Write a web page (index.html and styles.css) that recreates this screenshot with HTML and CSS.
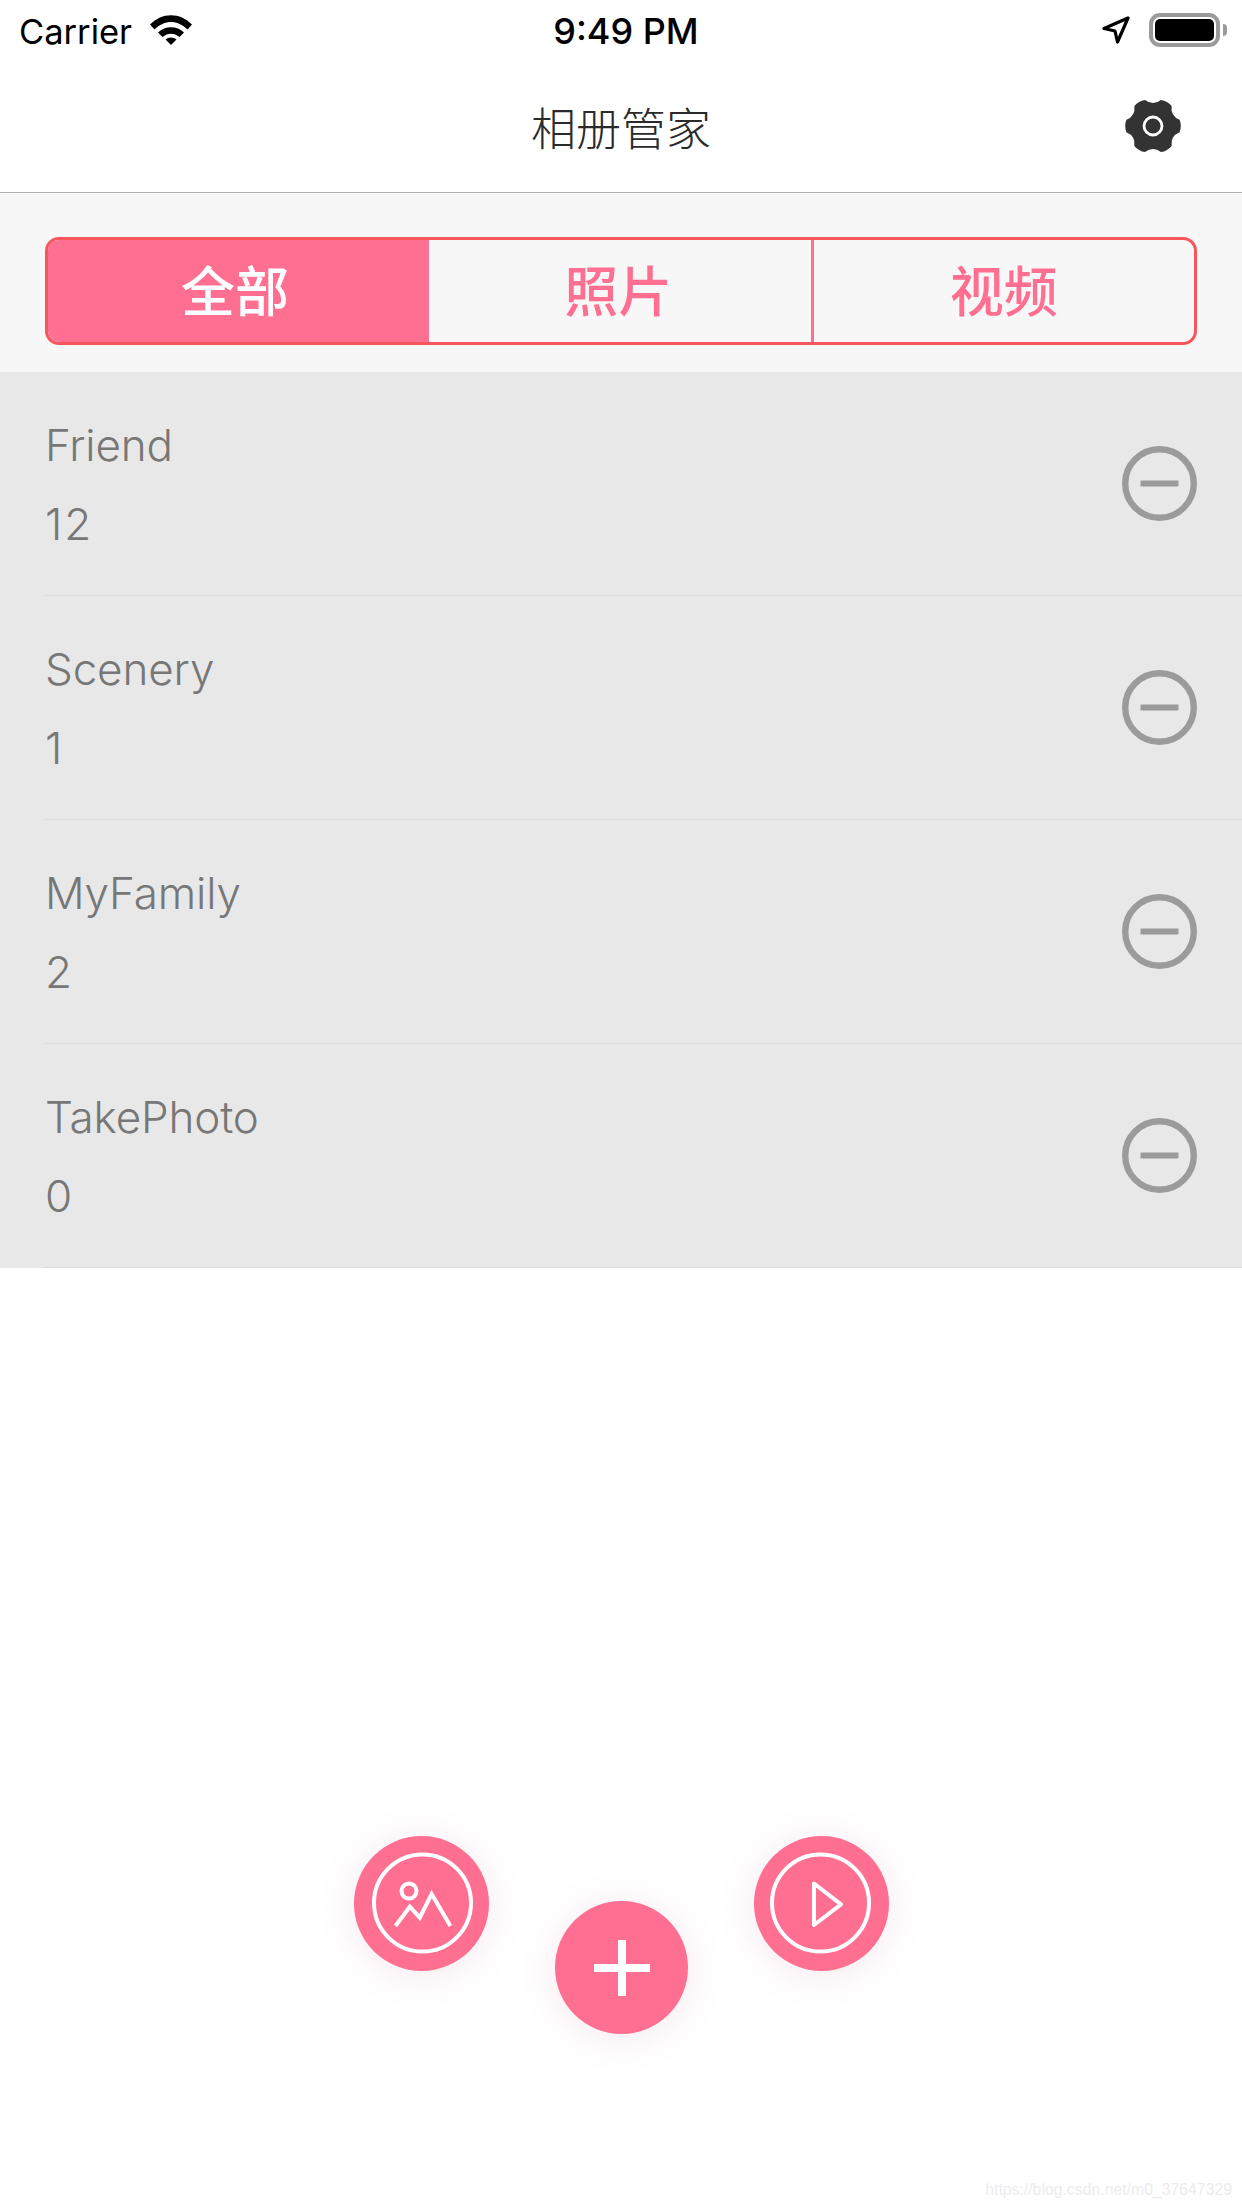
FILE: index.html
```html
<!DOCTYPE html>
<html lang="zh">
<head>
<meta charset="utf-8">
<title>相册管家</title>
<link rel="stylesheet" href="styles.css">
</head>
<body>
<div class="screen">
  <header class="status">
    <div class="status-left">
      <span class="carrier">Carrier</span>
      <svg class="wifi" viewBox="0 0 42 30" width="42" height="30"><path d="M0 9.5C12-3 30-3 42 9.500L37.500 14.500C27.500 4.500 14.500 4.500 4.500 14.500Z"/><path d="M8 17.500C15 10.500 27 10.500 34 17.500L29.500 22C24.500 17.500 17.500 17.500 12.500 22Z"/><path d="M15.500 24.500C18.500 21.700 23.500 21.700 26.500 24.500L21 30Z"/></svg>
    </div>
    <span class="time">9:49 PM</span>
    <div class="status-right">
      <svg class="arrow" viewBox="0 0 28 28" width="28" height="28"><path d="M26 2L2 12.500L13 15L15.500 26Z" fill="none" stroke="#000" stroke-width="3.200" stroke-linejoin="round"/></svg>
      <div class="battery"><div class="battery-fill"></div></div>
      <div class="battery-nub"></div>
    </div>
  </header>
  <nav class="navbar">
    <span></span>
    <h1 class="title">相册管家</h1>
    <svg class="gear" viewBox="0 0 58 54" width="58" height="54">
      <path fill="#333" d="M55.600 20.860Q58 27 55.600 33.140Q46.320 37 47.620 46.970Q43.500 52.110 36.980 53.110Q29 47 21.020 53.110Q14.500 52.110 10.380 46.970Q11.680 37 2.400 33.140Q0 27 2.400 20.860Q11.680 17 10.380 7.030Q14.500 1.890 21.020 0.890Q29 7 36.980 0.890Q43.500 1.890 47.620 7.030Q46.320 17 55.600 20.860Z"/>
      <circle cx="29" cy="27" r="9" fill="none" stroke="#fff" stroke-width="2.800"/>
    </svg>
  </nav>
  <section class="segment-bar">
    <div class="segment">
      <div class="seg seg-active">全部</div>
      <div class="seg seg-mid">照片</div>
      <div class="seg seg-last">视频</div>
    </div>
  </section>
  <ul class="list">
    <li class="row"><div class="row-inner"><div class="row-text"><div class="row-name">Friend</div><div class="row-count">12</div></div><svg class="minus" viewBox="0 0 75 75" width="75" height="75"><circle cx="37.500" cy="37.500" r="34.300" fill="none" stroke="#9b9b9b" stroke-width="6.400"/><rect x="18.500" y="34.500" width="38" height="6" fill="#9b9b9b"/></svg></div></li>
    <li class="row"><div class="row-inner"><div class="row-text"><div class="row-name">Scenery</div><div class="row-count">1</div></div><svg class="minus" viewBox="0 0 75 75" width="75" height="75"><circle cx="37.500" cy="37.500" r="34.300" fill="none" stroke="#9b9b9b" stroke-width="6.400"/><rect x="18.500" y="34.500" width="38" height="6" fill="#9b9b9b"/></svg></div></li>
    <li class="row"><div class="row-inner"><div class="row-text"><div class="row-name">MyFamily</div><div class="row-count">2</div></div><svg class="minus" viewBox="0 0 75 75" width="75" height="75"><circle cx="37.500" cy="37.500" r="34.300" fill="none" stroke="#9b9b9b" stroke-width="6.400"/><rect x="18.500" y="34.500" width="38" height="6" fill="#9b9b9b"/></svg></div></li>
    <li class="row"><div class="row-inner"><div class="row-text"><div class="row-name">TakePhoto</div><div class="row-count">0</div></div><svg class="minus" viewBox="0 0 75 75" width="75" height="75"><circle cx="37.500" cy="37.500" r="34.300" fill="none" stroke="#9b9b9b" stroke-width="6.400"/><rect x="18.500" y="34.500" width="38" height="6" fill="#9b9b9b"/></svg></div></li>
  </ul>
  <button class="fab fab-photo">
    <svg viewBox="0 0 135 135" width="135" height="135" fill="none" stroke="#fff" stroke-width="4"><circle cx="68.500" cy="67" r="48.500"/><circle cx="55" cy="55" r="7.500"/><path d="M41.500 90L55.800 70.700L65.800 81.700L77.600 58L96.400 90"/></svg>
  </button>
  <button class="fab fab-video">
    <svg viewBox="0 0 135 135" width="135" height="135" fill="none" stroke="#fff" stroke-width="4" stroke-linejoin="round"><circle cx="66.500" cy="67" r="48.500"/><path d="M60 47.500L87 68.300L60 89Z"/></svg>
  </button>
  <button class="fab fab-add">
    <svg viewBox="0 0 56 56" width="56" height="56"><rect x="24" y="0" width="8" height="56" fill="#fff"/><rect x="0" y="24" width="56" height="8" fill="#fff"/></svg>
  </button>
  <div class="watermark">https://blog.csdn.net/m0_37647329</div>
</div>
</body>
</html>
```

FILE: styles.css
```css
* { box-sizing: border-box; }
html, body { margin: 0; padding: 0; background: #fff; }
.screen {
  position: relative;
  width: 1242px;
  height: 2208px;
  overflow: hidden;
  background: #fff;
  font-family: Inter, "Noto Sans CJK SC", sans-serif;
}
.status {
  height: 60px;
  display: grid;
  grid-template-columns: 1fr auto 1fr;
  align-items: center;
  padding: 2px 15px 0 19px;
  color: #000;
}
.status-left { display: flex; align-items: center; gap: 18px; }
.carrier { font-size: 34.5px; font-weight: 400; }
.wifi { fill: #000; margin-top: -2px; }
.time { font-size: 36px; font-weight: 500; padding-left: 6px; }
.status-right { display: flex; align-items: center; justify-content: flex-end; margin-top: -2px; }
.arrow { margin-right: 19px; }
.battery {
  width: 71px;
  height: 34px;
  border: 4px solid #9a9a9a;
  border-radius: 11px;
  padding: 2px;
}
.battery-fill { width: 100%; height: 100%; background: #000; border-radius: 5px; }
.battery-nub {
  width: 4px;
  height: 12px;
  margin-left: 3px;
  background: #9a9a9a;
  border-radius: 0 6px 6px 0;
}
.navbar {
  height: 133px;
  display: grid;
  grid-template-columns: 1fr auto 1fr;
  align-items: center;
  padding: 0 60px;
  border-bottom: 1px solid #b2b2b2;
}
.title {
  margin: 0;
  font-family: "Noto Sans CJK SC", sans-serif;
  font-size: 45px;
  font-weight: 300;
  color: #2a2a2a;
}
.gear { justify-self: end; }
.segment-bar {
  height: 179px;
  background: #f7f7f7;
  padding: 44px 45px 0 45px;
}
.segment {
  display: grid;
  grid-template-columns: 381px 384.5px 1fr;
  height: 108px;
  border: 3px solid #f8565f;
  border-radius: 14px;
  overflow: hidden;
  font-family: "Noto Sans CJK SC", sans-serif;
  font-size: 54px;
  font-weight: 500;
  color: #ff6f91;
}
.seg {
  display: flex;
  align-items: center;
  justify-content: center;
  padding-bottom: 5px;
  border-right: 3px solid #ff6f91;
}
.seg-active { background: #ff6f91; color: #fff; padding-right: 4px; }
.seg-mid { padding-right: 3px; }
.seg-last { border-right: 0; }
.list { margin: 0; padding: 0; list-style: none; background: #e8e8e8; }
.row { height: 224px; padding-left: 45px; }
.row-inner {
  height: 100%;
  display: flex;
  align-items: center;
  justify-content: space-between;
  padding-right: 45px;
  border-bottom: 1px solid #dcdcdc;
}
.row-text { padding-top: 2px; }
.row-name, .row-count {
  font-size: 44px;
  font-weight: 350;
  line-height: 79px;
  color: #777;
}
.row-name { letter-spacing: -0.15px; }
.row-count { letter-spacing: 2px; }
.fab {
  position: absolute;
  display: flex;
  align-items: center;
  justify-content: center;
  padding: 0;
  border: 0;
  border-radius: 50%;
  background: #ff6f91;
  box-shadow: 0 4px 36px rgba(200, 120, 140, 0.17);
}
.fab-photo { left: 354px; top: 1836px; width: 135px; height: 135px; }
.fab-video { left: 754px; top: 1836px; width: 135px; height: 135px; }
.fab-add { left: 555px; top: 1901px; width: 133px; height: 133px; }
.watermark {
  position: absolute;
  right: 10px;
  top: 2181px;
  font-family: "Liberation Sans", sans-serif;
  font-size: 15.8px;
  color: #ececec;
}
```
